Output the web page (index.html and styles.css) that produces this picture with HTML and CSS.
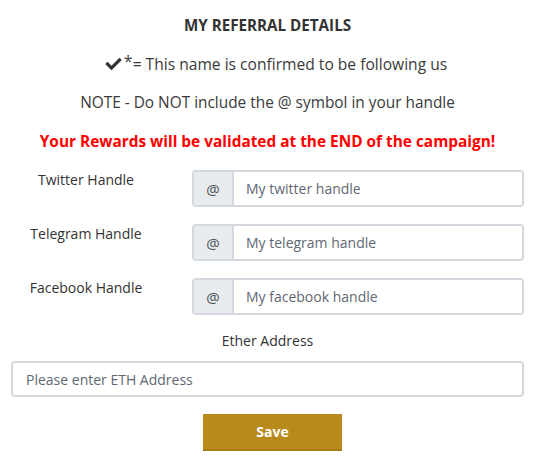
FILE: index.html
```html
<!DOCTYPE html>
<html>
<head>
<meta charset="utf-8">
<link rel="stylesheet" href="styles.css">
</head>
<body>
<div class="wrap">
  <h1 class="title">MY REFERRAL DETAILS</h1>
  <p class="line confirm"><svg class="check" viewBox="0 0 512 512" width="19" height="16"><path d="M173.9 439.4l-166.4-166.4c-10-10-10-26.2 0-36.2l36.2-36.2c10-10 26.2-10 36.2 0L192 312.7 432.1 72.6c10-10 26.2-10 36.2 0l36.2 36.2c10 10 10 26.2 0 36.2l-294.4 294.4c-10 10-26.2 10-36.2 0z"/></svg><span class="star">*</span>= This name is confirmed to be following us</p>
  <p class="line">NOTE - Do NOT include the @ symbol in your handle</p>
  <p class="line red">Your Rewards will be validated at the END of the campaign!</p>
  <div class="row">
    <label class="lbl">Twitter Handle</label>
    <div class="group"><span class="addon">@</span><input class="field" placeholder="My twitter handle"></div>
  </div>
  <div class="row">
    <label class="lbl">Telegram Handle</label>
    <div class="group"><span class="addon">@</span><input class="field" placeholder="My telegram handle"></div>
  </div>
  <div class="row">
    <label class="lbl">Facebook Handle</label>
    <div class="group"><span class="addon">@</span><input class="field" placeholder="My facebook handle"></div>
  </div>
  <div class="eth">
    <label class="eth-lbl">Ether Address</label>
    <input class="eth-input" placeholder="Please enter ETH Address">
  </div>
  <button class="save">Save</button>
</div>
</body>
</html>
```
FILE: styles.css
```css
html, body { margin: 0; padding: 0; background: #fff; }
body { font-family: "Open Sans", "DejaVu Sans", sans-serif; color: #333; font-size: 14px; }
.wrap {
  width: 513px;
  margin-left: 11px;
  padding-top: 14px;
  display: flex;
  flex-direction: column;
  gap: 17px;
}
.title { margin: 0; font-size: 15.2px; font-weight: 700; line-height: 22px; text-align: center; color: #333; }
.line { margin: 0; font-size: 15.4px; line-height: 22px; height: 22px; text-align: center; color: #3a3a3a; }
.confirm { font-size: 15.6px; padding-left: 16px; }
.check { fill: #333; vertical-align: -2px; }
.star { font-size: 16px; line-height: 0; position: relative; top: -3px; margin-left: 1px; }
.red { color: #f00; font-weight: 700; }
.row { display: grid; grid-template-columns: 150px 1fr; column-gap: 31px; align-items: start; }
.lbl { text-align: center; font-size: 14px; line-height: 21px; color: #333; margin-top: -1px; }
.group { display: flex; height: 37px; border: 2px solid #d5d9df; border-radius: 4px; box-sizing: border-box; overflow: hidden; }
.addon { width: 38px; background: #e9ecef; border-right: 2px solid #d5d9df; display: flex; align-items: center; justify-content: center; font-size: 15px; color: #495057; }
.field { flex: 1; border: 0; outline: 0; padding: 0 12px; font-family: inherit; font-size: 14px; color: #495057; background: #fff; }
.field::placeholder, .eth-input::placeholder { color: #5f6873; }
.eth { display: flex; flex-direction: column; gap: 9px; margin-top: -2px; }
.eth-lbl { text-align: center; font-size: 14px; line-height: 22px; color: #333; }
.eth-input { flex: none; height: 36px; border: 2px solid #d5d9df; border-radius: 4px; box-sizing: border-box; padding: 0 13px; outline: 0; font-family: inherit; font-size: 14px; color: #495057; background: #fff; }
.save {
  align-self: center;
  margin-left: 10px;
  width: 139px;
  height: 37px;
  border: 0;
  border-bottom: 2px solid #a87c12;
  background: #b8891b;
  color: #fff;
  font-family: inherit;
  font-weight: 700;
  font-size: 14px;
}
```
